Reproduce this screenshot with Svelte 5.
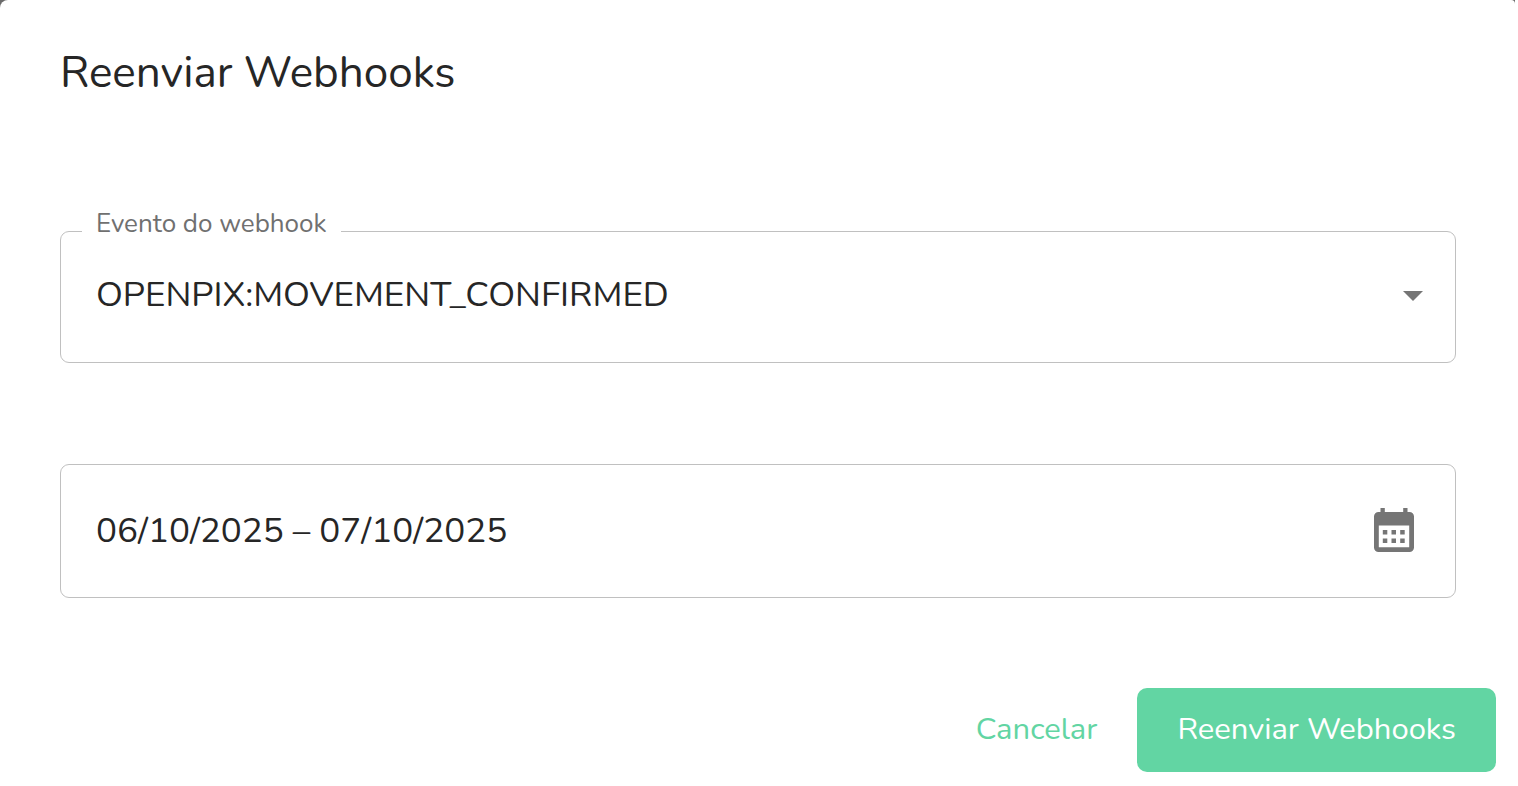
<script>
  let event = $state('OPENPIX:MOVEMENT_CONFIRMED');
  let period = $state('06/10/2025 – 07/10/2025');
  const events = ['OPENPIX:MOVEMENT_CONFIRMED'];
</script>

<div class="backdrop">
  <div class="dialog" role="dialog" aria-labelledby="dialog-title">
    <h1 id="dialog-title">Reenviar Webhooks</h1>

    <form onsubmit={(e) => e.preventDefault()}>
      <div class="fields">
        <fieldset class="outlined">
          <legend><label for="event">Evento do webhook</label></legend>
          <div class="select-wrap">
            <select id="event" bind:value={event}>
              {#each events as name}
                <option value={name}>{name}</option>
              {/each}
            </select>
            <svg class="arrow" viewBox="0 0 20 10" aria-hidden="true"><path d="M0 0h20L10 10z" /></svg>
          </div>
        </fieldset>

        <div class="date-field">
          <input type="text" aria-label="Período" bind:value={period} />
          <button type="button" class="icon-button" aria-label="Abrir calendário">
            <svg viewBox="0 0 40 44" aria-hidden="true">
              <path
                fill-rule="evenodd"
                d="M6.500 0h4.300v4h18.400V0h4.300v4H35.500a4.500 4.500 0 0 1 4.500 4.500v31a4.500 4.500 0 0 1-4.500 4.500H4.500a4.500 4.500 0 0 1-4.500-4.500V8.500a4.500 4.500 0 0 1 4.500-4.500h2zM4.800 17.500V39.200h30.400V17.500z"
              />
              <path d="M8.800 22h4.500v4.500H8.800zM17.500 22h4.500v4.500h-4.500zM26.200 22h4.500v4.500h-4.500zM8.800 30.500h4.500V35H8.800zM17.500 30.500h4.500V35h-4.500zM26.200 30.500h4.500V35h-4.500z" />
            </svg>
          </button>
        </div>
      </div>

      <div class="actions">
        <button type="button" class="cancel">Cancelar</button>
        <button type="submit" class="submit">Reenviar Webhooks</button>
      </div>
    </form>
  </div>
</div>

<style>
  :global(body) {
    background: #fff;
  }

  .backdrop {
    margin-right: 3px;
    background: #6b6b6b;
    font-family: Nunito, Lato, sans-serif;
    color: #262626;
  }

  .dialog {
    box-sizing: border-box;
    min-height: 100vh;
    padding: 43px 19px 14px 60px;
    background: #fff;
    border-radius: 8px 4px 0 0;
  }

  h1 {
    margin: 0 0 106px;
    font-size: 44px;
    line-height: 60px;
    font-weight: 400;
  }

  .fields {
    padding-right: 40px;
  }

  .outlined {
    min-width: 0;
    margin: 0;
    padding: 0 14px 24px 21px;
    border: 1px solid #c0c0c0;
    border-radius: 9px;
  }

  legend {
    padding: 0 14px 14px;
    font-size: 26px;
    line-height: 30px;
    color: #707070;
  }

  legend label {
    display: block;
  }

  .select-wrap {
    display: grid;
    align-items: center;
  }

  .select-wrap > * {
    grid-area: 1 / 1;
  }

  select,
  input {
    box-sizing: border-box;
    width: 100%;
    min-width: 0;
    margin: 0;
    border: 0;
    outline: 0;
    background: none;
    font: inherit;
    font-size: 35px;
    color: inherit;
  }

  select {
    appearance: none;
    height: 85px;
    padding: 0 56px 2px 14px;
  }

  .arrow {
    justify-self: end;
    width: 20px;
    height: 10px;
    margin-right: 18px;
    fill: #757575;
    pointer-events: none;
  }

  .date-field {
    display: flex;
    align-items: center;
    box-sizing: border-box;
    height: 134px;
    margin-top: 101px;
    padding: 0 41px 2px 35px;
    border: 1px solid #c0c0c0;
    border-radius: 9px;
  }

  input {
    flex: 1;
    height: 84px;
    padding: 0;
  }

  button {
    margin: 0;
    padding: 0;
    border: 0;
    background: none;
    font: inherit;
    cursor: pointer;
  }

  .icon-button svg {
    display: block;
    width: 40px;
    height: 44px;
    fill: #757575;
  }

  .actions {
    display: flex;
    justify-content: flex-end;
    margin-top: 90px;
  }

  .cancel,
  .submit {
    height: 84px;
    padding: 0 40px 2px;
    border-radius: 10px;
    font-size: 31px;
  }

  .cancel {
    color: #62d5a3;
  }

  .submit {
    background: #62d5a3;
    color: #fff;
  }
</style>
